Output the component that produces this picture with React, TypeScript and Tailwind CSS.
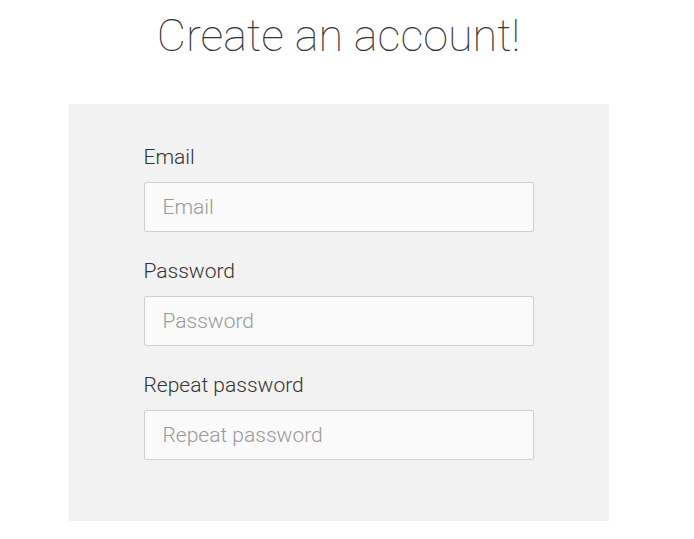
import React from 'react';

const Field = ({ label, type = 'text' }: { label: string; type?: string }) => (
  <div className="flex flex-col">
    <label className="text-[21px] leading-[28px] font-light text-[#333] mb-[11px]">{label}</label>
    <input
      type={type}
      placeholder={label}
      className="w-[390px] h-[50px] bg-[#fafafa] border border-[#cfcfcf] rounded-[2px] px-[18px] text-[21px] font-light text-[#333] placeholder:text-[#999] outline-none"
    />
  </div>
);

const App = () => {
  return (
    <div className="min-h-screen bg-white" style={{ fontFamily: 'Roboto, "Liberation Sans", sans-serif' }}>
      <div className="w-[677px] flex flex-col items-center">
        <h1 className="mt-[8px] text-[45px] leading-[56px] font-thin text-[#333]">Create an account!</h1>
        <div className="mt-[40px] w-[540px] h-[417px] bg-[#f2f2f2] pt-[39px] pl-[75px] flex flex-col gap-[25px]">
          <Field label="Email" type="email" />
          <Field label="Password" type="password" />
          <Field label="Repeat password" type="password" />
        </div>
      </div>
    </div>
  );
};

export default App;
